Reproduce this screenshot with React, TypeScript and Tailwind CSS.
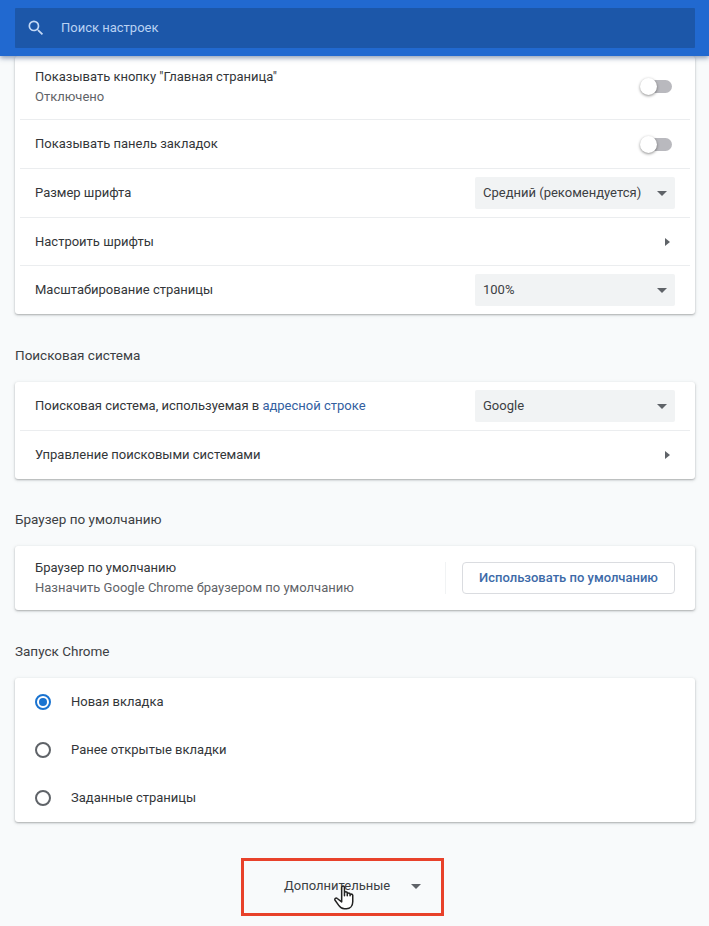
function Toggle() {
  return (
    <div className="relative h-[13px] w-[32px]">
      <div className="ml-[2px] h-[13px] w-[30px] rounded-full bg-[#b9b9be]" />
      <div className="absolute left-0 top-[-2px] h-[17px] w-[17px] rounded-full bg-white shadow-[0_1px_3px_rgba(0,0,0,0.45)]" />
    </div>
  );
}

function Caret({ className = '' }: { className?: string }) {
  return <div className={`h-0 w-0 border-x-[5px] border-t-[5px] border-x-transparent border-t-[#5f6368] ${className}`} />;
}

function Select({ label }: { label: string }) {
  return (
    <div className="flex h-[32px] w-[200px] items-center justify-between rounded-[2px] bg-[#f1f3f4] pl-2 pr-[8px] text-[13px] text-[#3c4043]">
      <span>{label}</span>
      <Caret />
    </div>
  );
}

function Row({ children, divider = true, className = 'h-[48px]' }: { children: React.ReactNode; divider?: boolean; className?: string }) {
  return (
    <div className={`mx-[5px] flex items-center justify-between pl-[15px] pr-[15px] text-[13px] text-[#333639] ${divider ? 'border-b border-[#ebedef]' : ''} ${className}`}>
      {children}
    </div>
  );
}

function Arrow() {
  return <div className="mr-[5px] h-0 w-0 border-y-[4px] border-l-[5px] border-y-transparent border-l-[#5f6368]" />;
}

function Card({ children, className = '' }: { children: React.ReactNode; className?: string }) {
  return <div className={`ml-[15px] w-[680px] rounded-[3px] bg-white shadow-[0_1px_2px_rgba(60,64,67,0.35),0_1px_4px_rgba(60,64,67,0.12)] ${className}`}>{children}</div>;
}

function SectionTitle({ children }: { children: React.ReactNode }) {
  return <div className="mx-[15px] flex h-[68px] items-center pt-[14px] text-[13.5px] text-[#3c4043]">{children}</div>;
}

function Radio({ label, checked = false }: { label: string; checked?: boolean }) {
  return (
    <div className="flex h-[48px] items-center pl-[20px] text-[13px] text-[#333639]">
      <div className={`flex h-[16px] w-[16px] items-center justify-center rounded-full border-2 ${checked ? 'border-[#1a73d0]' : 'border-[#5f6368]'}`}>
        {checked ? <div className="h-[8px] w-[8px] rounded-full bg-[#1a73d0]" /> : null}
      </div>
      <span className="ml-[20px]">{label}</span>
    </div>
  );
}

export default function App() {
  return (
    <div className="h-[926px] w-[709px] overflow-hidden bg-[#f8fafb] font-['Roboto',sans-serif]">
      <header className="relative z-10 h-[56px] bg-[#2169d0] pl-[15px] pt-[8px] shadow-[0_2px_5px_rgba(30,60,110,0.5)]">
        <div className="flex h-[40px] w-[680px] items-center rounded-[1px] bg-[#1c57a9] pl-[11px] text-[13px] text-[#b9d2f3]">
          <svg viewBox="0 0 24 24" className="h-[20px] w-[20px]" fill="#c3d8f5">
            <path d="M15.5 14h-.79l-.28-.27A6.471 6.471 0 0 0 16 9.5 6.5 6.5 0 1 0 9.5 16c1.61 0 3.09-.59 4.23-1.57l.27.28v.79l5 4.99L20.49 19l-4.99-5zm-6 0C7.01 14 5 11.99 5 9.5S7.01 5 9.5 5 14 7.01 14 9.5 11.99 14 9.5 14z" />
          </svg>
          <span className="ml-[15px]">Поиск настроек</span>
        </div>
      </header>

      <Card className="h-[258px]">
        <Row className="h-[64px] pb-[2px]">
          <div>
            <div className="leading-[20px]">Показывать кнопку "Главная страница"</div>
            <div className="leading-[20px] text-[#5f6368]">Отключено</div>
          </div>
          <div className="mr-[3px]"><Toggle /></div>
        </Row>
        <Row className="h-[49px]">
          <span className="mt-[-1px]">Показывать панель закладок</span>
          <div className="mr-[3px]"><Toggle /></div>
        </Row>
        <Row className="h-[49px]">
          <span>Размер шрифта</span>
          <Select label="Средний (рекомендуется)" />
        </Row>
        <Row>
          <span>Настроить шрифты</span>
          <Arrow />
        </Row>
        <Row divider={false}>
          <span>Масштабирование страницы</span>
          <Select label="100%" />
        </Row>
      </Card>

      <SectionTitle>Поисковая система</SectionTitle>
      <Card className="h-[97px]">
        <Row className="h-[49px]">
          <span>
            Поисковая система, используемая в <span className="text-[#33609f]">адресной строке</span>
          </span>
          <Select label="Google" />
        </Row>
        <Row divider={false}>
          <span>Управление поисковыми системами</span>
          <Arrow />
        </Row>
      </Card>

      <div className="mt-[-1px]">
        <SectionTitle>Браузер по умолчанию</SectionTitle>
      </div>
      <Card className="h-[64px]">
        <Row divider={false} className="h-[64px]">
          <div>
            <div className="leading-[20px]">Браузер по умолчанию</div>
            <div className="leading-[20px] text-[#5f6368]">Назначить Google Chrome браузером по умолчанию</div>
          </div>
          <div className="flex items-center">
            <div className="mr-[16px] h-[32px] w-px bg-[#f1f3f4]" />
            <div className="flex h-[32px] w-[213px] items-center justify-center rounded-[4px] border border-[#dadce0] text-[13px] font-medium text-[#3d6aa8]">
              Использовать по умолчанию
            </div>
          </div>
        </Row>
      </Card>

      <SectionTitle>Запуск Chrome</SectionTitle>
      <Card className="h-[144px]">
        <Radio label="Новая вкладка" checked />
        <Radio label="Ранее открытые вкладки" />
        <Radio label="Заданные страницы" />
      </Card>

      <div className="ml-[241px] mt-[36px]">
        <div className="relative flex h-[58px] w-[203px] items-center border-[3px] border-[#e8412a] pl-[40px] text-[13px] text-[#3c4043]">
          <span className="mt-[-2px]">Дополнительные</span>
          <Caret className="ml-[21px] mt-[-1px]" />
          <svg viewBox="0 0 24 24" className="absolute left-[86px] top-[22px] h-[28px] w-[28px]" fill="#fff" stroke="#222" strokeWidth="1.3" strokeLinejoin="round" strokeLinecap="round">
            <path d="M10 11V3.8a1.2 1.2 0 0 1 2.4 0V11m0-1V8.6a1.2 1.2 0 0 1 2.4 0V11m0-1.2a1.2 1.2 0 0 1 2.4 0V11m0-.6a1.2 1.2 0 0 1 2.3 0V16c0 3.6-2.3 6-5.4 6h-1.8c-2.3 0-3.6-1-4.8-2.8L4.2 14.6c-.6-1.2 1-2.4 2-1.3L10 16.2V11" />
          </svg>
        </div>
      </div>
    </div>
  );
}
